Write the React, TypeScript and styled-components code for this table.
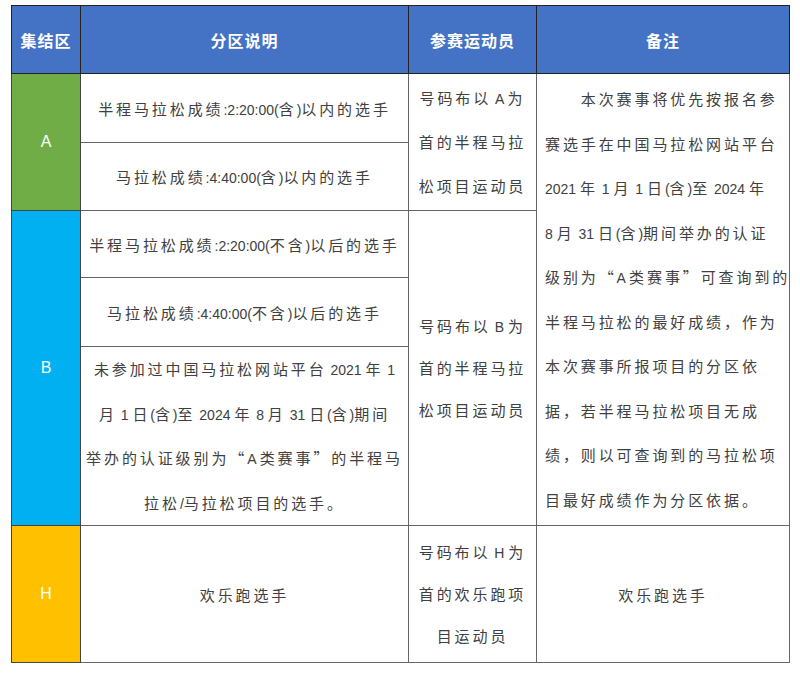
import React from 'react';
import styled, { createGlobalStyle } from 'styled-components';

const GlobalStyle = createGlobalStyle`
  body {
    margin: 0;
    background: #ffffff;
    font-family: 'Noto Sans CJK SC', sans-serif;
  }
`;

const Page = styled.div`
  padding: 5px 0 0 11px;
`;

const Table = styled.table`
  border-collapse: collapse;
  table-layout: fixed;
  width: 778px;
  color: #404040;
`;

const HeadCell = styled.th`
  height: 67px;
  padding: 0;
  background: #4472c4;
  color: #ffffff;
  font-size: 16px;
  font-weight: bold;
  letter-spacing: 1px;
  text-align: center;
  vertical-align: middle;
  border: 1px solid #222;
`;

const ZoneCell = styled.td<{ $bg: string }>`
  padding: 0;
  background: ${(p) => p.$bg};
  color: #ffffff;
  font-family: 'Liberation Sans', sans-serif;
  font-size: 16px;
  text-align: center;
  vertical-align: middle;
  border: 1px solid #444;
`;

const Cell = styled.td<{ $h?: number; $lh?: number; $align?: string }>`
  height: ${(p) => (p.$h ? `${p.$h}px` : 'auto')};
  padding: ${(p) => (p.$align === 'left' ? '0 0 0 8px' : '0 2px')};
  font-size: 15px;
  letter-spacing: 2.9px;
  line-height: ${(p) => p.$lh ?? 45}px;
  text-align: ${(p) => p.$align ?? 'center'};
  vertical-align: middle;
  border: 1px solid #666;
  white-space: nowrap;
`;

// latin runs are set narrower and without the wide CJK tracking
const Latin = styled.span`
  font-family: 'Liberation Sans', sans-serif;
  font-size: 14px;
  letter-spacing: 0;
  line-height: 1;
`;

const Txt = ({ children }: { children: string }) => {
  const parts = children.split(/([\x20-\x7e]+)/).filter(Boolean);
  return (
    <>
      {parts.map((p, i) =>
        /^[\x20-\x7e]+$/.test(p) ? <Latin key={i}>{p}</Latin> : <span key={i}>{p}</span>,
      )}
    </>
  );
};

const Lines = ({ lines }: { lines: string[] }) => (
  <>
    {lines.map((l, i) => (
      <div key={i}>
        <Txt>{l}</Txt>
      </div>
    ))}
  </>
);

const noteLines = [
  '\u3000\u3000本次赛事将优先按报名参',
  '赛选手在中国马拉松网站平台',
  '2021 年 1 月 1 日(含)至 2024 年',
  '8 月 31 日(含)期间举办的认证',
  '级别为“A 类赛事”可查询到的',
  '半程马拉松的最好成绩，作为',
  '本次赛事所报项目的分区依',
  '据，若半程马拉松项目无成',
  '绩，则以可查询到的马拉松项',
  '目最好成绩作为分区依据。',
];

const App = () => (
  <Page>
    <GlobalStyle />
    <Table>
      <colgroup>
        <col style={{ width: 69 }} />
        <col style={{ width: 328 }} />
        <col style={{ width: 128 }} />
        <col style={{ width: 253 }} />
      </colgroup>
      <thead>
        <tr>
          <HeadCell>集结区</HeadCell>
          <HeadCell>分区说明</HeadCell>
          <HeadCell>参赛运动员</HeadCell>
          <HeadCell>备注</HeadCell>
        </tr>
      </thead>
      <tbody>
        <tr>
          <ZoneCell $bg="#70ad47" rowSpan={2}>A</ZoneCell>
          <Cell $h={68}>
            <Txt>半程马拉松成绩:2:20:00(含)以内的选手</Txt>
          </Cell>
          <Cell rowSpan={2} $lh={44}>
            <Lines lines={['号码布以 A 为', '首的半程马拉', '松项目运动员']} />
          </Cell>
          <Cell rowSpan={5} $lh={44.5} $align="left">
            <Lines lines={noteLines} />
          </Cell>
        </tr>
        <tr>
          <Cell $h={67}>
            <Txt>马拉松成绩:4:40:00(含)以内的选手</Txt>
          </Cell>
        </tr>
        <tr>
          <ZoneCell $bg="#00b0f0" rowSpan={3}>B</ZoneCell>
          <Cell $h={66}>
            <Txt>半程马拉松成绩:2:20:00(不含)以后的选手</Txt>
          </Cell>
          <Cell rowSpan={3} $lh={42}>
            <Lines lines={['号码布以 B 为', '首的半程马拉', '松项目运动员']} />
          </Cell>
        </tr>
        <tr>
          <Cell $h={68}>
            <Txt>马拉松成绩:4:40:00(不含)以后的选手</Txt>
          </Cell>
        </tr>
        <tr>
          <Cell $h={178} $lh={44.5}>
            <Lines
              lines={[
                '未参加过中国马拉松网站平台 2021 年 1',
                '月 1 日(含)至 2024 年 8 月 31 日(含)期间',
                '举办的认证级别为“A 类赛事”的半程马',
                '拉松/马拉松项目的选手。',
              ]}
            />
          </Cell>
        </tr>
        <tr>
          <ZoneCell $bg="#ffc000">H</ZoneCell>
          <Cell $h={136}>欢乐跑选手</Cell>
          <Cell $lh={42}>
            <Lines lines={['号码布以 H 为', '首的欢乐跑项', '目运动员']} />
          </Cell>
          <Cell>欢乐跑选手</Cell>
        </tr>
      </tbody>
    </Table>
  </Page>
);

export default App;
